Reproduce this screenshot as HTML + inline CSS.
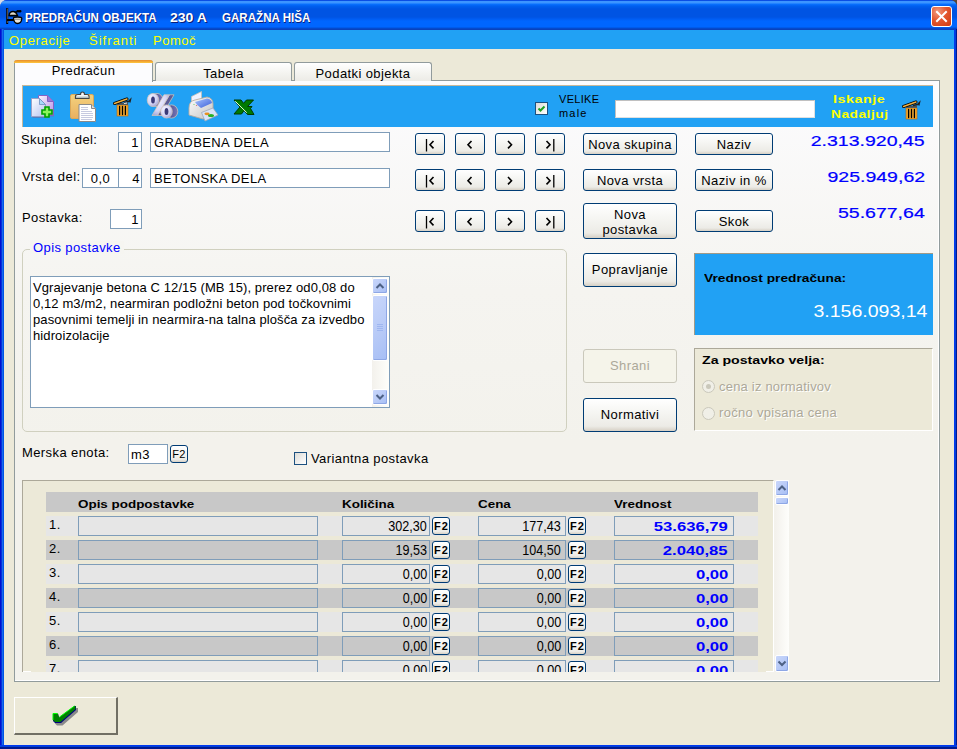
<!DOCTYPE html>
<html><head><meta charset="utf-8">
<style>
*{margin:0;padding:0;box-sizing:border-box}
html,body{width:957px;height:749px;overflow:hidden;background:#ece9d8;font-family:"Liberation Sans",sans-serif;font-size:13px;color:#000;letter-spacing:0.4px}
.a{position:absolute}
.t{position:absolute;white-space:nowrap;line-height:1}
#frame{left:0;top:0;width:957px;height:749px;background:#0842d8;border-radius:7px 7px 0 0}
#title{left:0;top:0;width:957px;height:30px;border-radius:7px 7px 0 0;background:linear-gradient(to bottom,#0a4ee4 0px,#0a4ee4 1px,#3d95ff 1px,#3d95ff 3px,#0a72ff 4px,#0060f0 6px,#0054e3 9px,#0054e3 17px,#005cf2 19px,#0066ff 21px,#0066ff 27px,#0050d8 28px,#0a44c0 29px,#0a40b8 30px)}
#lb{left:0;top:29px;width:4px;height:720px;background:linear-gradient(to right,#0010d0 0 1px,#0831d9 1px 2px,#166aee 2px 3px,#0055e5 3px 4px)}
#rb{left:954px;top:29px;width:3px;height:720px;background:linear-gradient(to right,#0038f0 0 1px,#0040d8 1px 2px,#001890 2px 3px)}
#bb{left:0;top:745px;width:957px;height:4px;background:linear-gradient(to bottom,#0038f0 0 1px,#0040d8 1px 2px,#001890 2px 4px)}
#client{left:4px;top:30px;width:950px;height:715px;background:#ece9d8}
#menu{left:4px;top:30px;width:950px;height:19px;background:#21a1f4}
.mi{color:#ffff00;font-size:13px}
.ttxt{letter-spacing:0;color:#fff;font-weight:bold;font-size:13px;text-shadow:1px 1px 0 #0a1e7a}
#close{left:931px;top:6px;width:21px;height:21px;border:1px solid #fff;border-radius:3px;background:radial-gradient(circle at 30% 25%,#f19b7f 0%,#e3572f 45%,#cf3a10 100%)}
/* tabs */
#pane{left:14px;top:80px;width:926px;height:602px;border:1px solid #919b9c;background:linear-gradient(to bottom,#fcfcfe 0%,#f5f4f0 35%,#f3f2ec 60%,#f3f2ec 100%);box-shadow:inset -1px -1px 0 #fff}
.tab{position:absolute;border:1px solid #919b9c;border-bottom:none;border-radius:3px 3px 0 0;background:linear-gradient(to bottom,#fff 0%,#f3f3ef 60%,#ecebe6 100%);text-align:center;font-size:13px}
#tb{left:22px;top:85px;width:911px;height:42px;background:#21a1f4;border-top:1px solid #c8b89a;border-left:1px solid #c8b89a}
.inp{background:#fff;border:1px solid #7f9db9;font-size:13px;line-height:1;white-space:nowrap}
.btn{border:1px solid #003c74;border-radius:3px;background:linear-gradient(to bottom,#fff 0%,#f6f6f3 40%,#ecebe6 85%,#d6d0c5 100%);text-align:center;font-size:13px;line-height:1;white-space:nowrap}
.amt{letter-spacing:0;color:#0000ff;font-size:15px;transform:scaleX(1.3);transform-origin:right;-webkit-text-stroke:0.2px #0000ff}
.sbb{border:1px solid #fff;border-radius:2px;background:linear-gradient(135deg,#c8d6fb 0%,#b9cbf7 50%,#a6bef5 100%);box-shadow:inset -1px -1px 0 #8ea7e5}
.gh{letter-spacing:0;font-size:11px;font-weight:bold;transform:scaleX(1.22);transform-origin:left}
.gc{border:1px solid #7f9db9;font-size:13px;line-height:1;white-space:nowrap;background:transparent}
.gv{color:#0000ff;font-weight:bold;font-size:13px;transform-origin:right}
.f2{border:1px solid #003c74;border-radius:3px;background:linear-gradient(to bottom,#fff,#ecebe6 85%,#d6d0c5);font-size:11px;font-weight:bold;text-align:center;line-height:1;padding-top:3px}
.f2s{border:1px solid #003c74;border-radius:3px;background:linear-gradient(to bottom,#fff,#ecebe6 85%,#d6d0c5);text-align:center;line-height:1}
.gn{position:absolute;top:2px;font-size:14px;line-height:1;letter-spacing:0;transform:scaleX(0.9);transform-origin:right}
.gv2{right:5px;top:3px;color:#0000ff;font-weight:bold;font-size:13px;transform:scaleX(1.28)}
.f2{letter-spacing:1px;text-indent:1px}
</style></head>
<body>
<div class="a" style="left:0;top:0;width:8px;height:8px;background:#d8dce6"></div><div class="a" style="left:949px;top:0;width:8px;height:8px;background:#5a4636"></div>
<div class="a" id="frame"></div>
<div class="a" id="title"></div>
<div class="a" id="lb"></div><div class="a" id="rb"></div><div class="a" id="bb"></div>
<div class="a" id="client"></div>
<div class="a" id="menu"></div>
<div class="t mi" style="left:9px;top:34px;letter-spacing:0.65px">Operacije</div>
<div class="t mi" style="left:89px;top:34px;letter-spacing:1px">Šifranti</div>
<div class="t mi" style="left:153px;top:34px;letter-spacing:0.5px">Pomoč</div>
<div class="t ttxt" style="left:25px;top:11px;transform:scaleX(0.89);transform-origin:left">PREDRAČUN OBJEKTA</div>
<div class="t ttxt" style="left:170px;top:11px;transform:scaleX(1.08);transform-origin:left">230 A</div>
<div class="t ttxt" style="left:222px;top:11px;transform:scaleX(0.89);transform-origin:left">GARAŽNA HIŠA</div>
<svg class="a" style="left:0;top:0" width="30" height="30" viewBox="0 0 30 30">
<path d="M7.2 8V24" stroke="#000" stroke-width="2"/><path d="M7.4 8.5V23" stroke="#8a7a6a" stroke-width="0.7"/>
<path d="M7 20H14" stroke="#000" stroke-width="2"/>
<path d="M9 15.5Q9.5 11.5 13 11.5Q16 11.5 17.5 15.5Z" fill="#e0dacd" stroke="#000" stroke-width="1.3"/>
<path d="M15 12.5L17 10.5H21V12H17.5Z" fill="#000" stroke="#000" stroke-width="0.8"/>
<path d="M9.5 15.8H17.5" stroke="#000" stroke-width="1.2"/>
<path d="M13.5 18Q13.5 17 17.5 17Q21.8 17 21.8 18.5Q21.5 23.5 17.5 23.5Q14 23.5 13.5 18Z" fill="#e8e4dc" stroke="#000" stroke-width="1.3"/>
<path d="M14.5 19.2H21" stroke="#666" stroke-width="0.8"/>
</svg>
<div class="a" id="close"><svg width="19" height="19" style="position:absolute;left:0;top:0"><path d="M5 5L14 14M14 5L5 14" stroke="#fff" stroke-width="2" stroke-linecap="square"/></svg></div>

<!-- tab control -->
<div class="a" id="pane"></div>
<div class="tab" style="left:155px;top:62px;width:137px;height:19px;padding-top:3px">Tabela</div>
<div class="tab" style="left:294px;top:62px;width:138px;height:19px;padding-top:3px">Podatki objekta</div>
<div class="tab" style="left:14px;top:60px;width:139px;height:22px;border-top:none;background:#fcfcfe;padding-top:3px;border-radius:3px 3px 0 0">Predračun</div>
<div class="a" style="left:14px;top:60px;width:139px;height:3px;background:linear-gradient(to bottom,#e68b2c,#ffc73c);border-radius:3px 3px 0 0"></div>
<div class="a" id="tb"></div>

<!-- toolbar content -->
<div class="a" style="left:535px;top:102px;width:13px;height:13px;border:1px solid #1c5180;background:linear-gradient(135deg,#dcdcd7,#fff)"><svg width="11" height="11" style="position:absolute;left:0;top:0"><path d="M2.5 5.5L4.5 7.5L8.5 3.5" stroke="#21a121" stroke-width="2" fill="none"/></svg></div>
<div class="t" style="left:559px;top:94px;font-size:11px;letter-spacing:0.3px">VELIKE</div>
<div class="t" style="left:559px;top:108px;font-size:11px;letter-spacing:1.2px">male</div>
<div class="a" style="left:615px;top:100px;width:200px;height:18px;background:#fff;border:1px solid #c0c0c0;border-right-color:#e0e0e0;border-bottom-color:#e0e0e0"></div>
<div class="t" style="left:833px;top:94px;font-size:11px;font-weight:bold;color:#ffff00;transform:scaleX(1.3);transform-origin:left">Iskanje</div>
<div class="t" style="left:831px;top:109px;font-size:11px;font-weight:bold;color:#ffff00;transform:scaleX(1.25);transform-origin:left">Nadaljuj</div>

<!-- form -->
<div class="t" style="left:21px;top:133px">Skupina del:</div>
<div class="t" style="left:22px;top:170px">Vrsta del:</div>
<div class="t" style="left:22px;top:211px">Postavka:</div>
<div class="a inp" style="left:118px;top:132px;width:24px;height:20px;text-align:right;padding:3px 2px 0 0">1</div>
<div class="a inp" style="left:82px;top:168px;width:37px;height:20px;text-align:center;padding:3px 0 0 0">0,0</div>
<div class="a inp" style="left:118px;top:168px;width:24px;height:20px;text-align:right;padding:3px 1px 0 0">4</div>
<div class="a inp" style="left:110px;top:209px;width:32px;height:20px;text-align:right;padding:3px 2px 0 0">1</div>
<div class="a inp" style="left:150px;top:132px;width:240px;height:20px;padding:3px 0 0 3px">GRADBENA DELA</div>
<div class="a inp" style="left:150px;top:168px;width:240px;height:20px;padding:3px 0 0 3px">BETONSKA DELA</div>
<div class="a btn" style="left:415px;top:133px;width:30px;height:22px"><svg width="30" height="22" style="position:absolute;left:-1px;top:-1px"><path d="M11.5 6V18.5" stroke="#000" stroke-width="1.3"/><path d="M18.5 8L15 11.7L18.5 15.4" stroke="#000" stroke-width="1.6" fill="none"/></svg></div>
<div class="a btn" style="left:455px;top:133px;width:30px;height:22px"><svg width="30" height="22" style="position:absolute;left:-1px;top:-1px"><path d="M16.5 8L13 11.7L16.5 15.4" stroke="#000" stroke-width="1.6" fill="none"/></svg></div>
<div class="a btn" style="left:495px;top:133px;width:30px;height:22px"><svg width="30" height="22" style="position:absolute;left:-1px;top:-1px"><path d="M13 8L16.5 11.7L13 15.4" stroke="#000" stroke-width="1.6" fill="none"/></svg></div>
<div class="a btn" style="left:535px;top:133px;width:30px;height:22px"><svg width="30" height="22" style="position:absolute;left:-1px;top:-1px"><path d="M11.5 8L15 11.7L11.5 15.4" stroke="#000" stroke-width="1.6" fill="none"/><path d="M18.8 6V18.5" stroke="#000" stroke-width="1.3"/></svg></div>
<div class="a btn" style="left:415px;top:169px;width:30px;height:22px"><svg width="30" height="22" style="position:absolute;left:-1px;top:-1px"><path d="M11.5 6V18.5" stroke="#000" stroke-width="1.3"/><path d="M18.5 8L15 11.7L18.5 15.4" stroke="#000" stroke-width="1.6" fill="none"/></svg></div>
<div class="a btn" style="left:455px;top:169px;width:30px;height:22px"><svg width="30" height="22" style="position:absolute;left:-1px;top:-1px"><path d="M16.5 8L13 11.7L16.5 15.4" stroke="#000" stroke-width="1.6" fill="none"/></svg></div>
<div class="a btn" style="left:495px;top:169px;width:30px;height:22px"><svg width="30" height="22" style="position:absolute;left:-1px;top:-1px"><path d="M13 8L16.5 11.7L13 15.4" stroke="#000" stroke-width="1.6" fill="none"/></svg></div>
<div class="a btn" style="left:535px;top:169px;width:30px;height:22px"><svg width="30" height="22" style="position:absolute;left:-1px;top:-1px"><path d="M11.5 8L15 11.7L11.5 15.4" stroke="#000" stroke-width="1.6" fill="none"/><path d="M18.8 6V18.5" stroke="#000" stroke-width="1.3"/></svg></div>
<div class="a btn" style="left:415px;top:210px;width:30px;height:22px"><svg width="30" height="22" style="position:absolute;left:-1px;top:-1px"><path d="M11.5 6V18.5" stroke="#000" stroke-width="1.3"/><path d="M18.5 8L15 11.7L18.5 15.4" stroke="#000" stroke-width="1.6" fill="none"/></svg></div>
<div class="a btn" style="left:455px;top:210px;width:30px;height:22px"><svg width="30" height="22" style="position:absolute;left:-1px;top:-1px"><path d="M16.5 8L13 11.7L16.5 15.4" stroke="#000" stroke-width="1.6" fill="none"/></svg></div>
<div class="a btn" style="left:495px;top:210px;width:30px;height:22px"><svg width="30" height="22" style="position:absolute;left:-1px;top:-1px"><path d="M13 8L16.5 11.7L13 15.4" stroke="#000" stroke-width="1.6" fill="none"/></svg></div>
<div class="a btn" style="left:535px;top:210px;width:30px;height:22px"><svg width="30" height="22" style="position:absolute;left:-1px;top:-1px"><path d="M11.5 8L15 11.7L11.5 15.4" stroke="#000" stroke-width="1.6" fill="none"/><path d="M18.8 6V18.5" stroke="#000" stroke-width="1.3"/></svg></div>

<div class="a btn" style="left:583px;top:133px;width:94px;height:22px;padding-top:4px">Nova skupina</div>
<div class="a btn" style="left:583px;top:169px;width:94px;height:22px;padding-top:4px">Nova vrsta</div>
<div class="a btn" style="left:583px;top:203px;width:94px;height:36px;padding-top:3px;line-height:15px">Nova<br>postavka</div>
<div class="a btn" style="left:695px;top:133px;width:78px;height:22px;padding-top:4px">Naziv</div>
<div class="a btn" style="left:695px;top:169px;width:78px;height:22px;padding-top:4px">Naziv in %</div>
<div class="a btn" style="left:695px;top:210px;width:78px;height:22px;padding-top:4px">Skok</div>
<div class="t amt" style="right:32px;top:133px">2.313.920,45</div>
<div class="t amt" style="right:32px;top:169px">925.949,62</div>
<div class="t amt" style="right:32px;top:205px">55.677,64</div>

<!-- group box -->
<div class="a" style="left:22px;top:249px;width:545px;height:183px;border:1px solid #d0d0bf;border-radius:5px"></div>
<div class="t" style="left:30px;top:241px;padding:0 3px;background:#f6f5f1;color:#0000ff;font-size:13px">Opis postavke</div>
<div class="a" style="left:30px;top:276px;width:360px;height:132px;background:#fff;border:1px solid #7f9db9"></div>
<div class="a" style="left:33px;top:280px;font-size:13px;line-height:16px;white-space:nowrap;letter-spacing:0.1px">Vgrajevanje betona C 12/15 (MB 15), prerez od0,08 do<br>0,12 m3/m2, nearmiran podložni beton pod točkovnimi<br>pasovnimi temelji in nearmira-na talna plošča za izvedbo<br>hidroizolacije</div>
<div class="a" style="left:372px;top:277px;width:17px;height:130px;background:linear-gradient(to right,#f3f1ec,#fefefb)"></div>
<div class="a sbb" style="left:372px;top:278px;width:16px;height:16px"><svg width="14" height="14" style="position:absolute;left:0;top:0"><path d="M3.5 9L7 5.5L10.5 9" stroke="#4d6185" stroke-width="2" fill="none"/></svg></div>
<div class="a sbb" style="left:372px;top:295px;width:16px;height:66px"><svg width="14" height="64" style="position:absolute;left:0;top:0"><path d="M4 28.5H10M4 30.5H10M4 32.5H10M4 34.5H10" stroke="#9eb6f0" stroke-width="1"/></svg></div>
<div class="a sbb" style="left:372px;top:389px;width:16px;height:16px"><svg width="14" height="14" style="position:absolute;left:0;top:0"><path d="M3.5 5L7 8.5L10.5 5" stroke="#4d6185" stroke-width="2" fill="none"/></svg></div>

<div class="a btn" style="left:583px;top:253px;width:94px;height:34px;padding-top:9px">Popravljanje</div>
<div class="a" style="left:583px;top:349px;width:94px;height:34px;padding-top:9px;border:1px solid #cac8bb;border-radius:3px;background:#f5f4ea;color:#aca899;text-align:center;font-size:13px;line-height:1">Shrani</div>
<div class="a btn" style="left:583px;top:398px;width:94px;height:34px;padding-top:9px">Normativi</div>

<div class="a" style="left:694px;top:253px;width:239px;height:82px;background:#21a1f4;border-top:1px solid #a09a88;border-left:1px solid #a09a88"></div>
<div class="t" style="left:704px;top:273px;font-size:11px;font-weight:bold;letter-spacing:0;transform:scaleX(1.25);transform-origin:left">Vrednost predračuna:</div>
<div class="t" style="right:30px;top:304px;font-size:16px;color:#fff;letter-spacing:0;transform:scaleX(1.22);transform-origin:right">3.156.093,14</div>

<div class="a" style="left:694px;top:348px;width:239px;height:83px;background:#ece9d8;border-top:1px solid #aca899;border-left:1px solid #aca899;border-bottom:1px solid #fff;border-right:1px solid #fff"></div>
<div class="t" style="left:702px;top:355px;font-size:11px;font-weight:bold;letter-spacing:0;transform:scaleX(1.286);transform-origin:left">Za postavko velja:</div>
<div class="a" style="left:702px;top:380px;width:13px;height:13px;border:1px solid #cac8bb;border-radius:50%;background:#f0efe7"><div class="a" style="left:3px;top:3px;width:5px;height:5px;border-radius:50%;background:#cac8bb"></div></div>
<div class="t" style="left:719px;top:380px;font-size:13px;letter-spacing:0.2px;color:#aca899;text-shadow:1px 1px 0 #fff">cena iz normativov</div>
<div class="a" style="left:702px;top:407px;width:13px;height:13px;border:1px solid #cac8bb;border-radius:50%;background:#f0efe7"></div>
<div class="t" style="left:719px;top:406px;font-size:13px;letter-spacing:0.3px;color:#aca899;text-shadow:1px 1px 0 #fff">ročno vpisana cena</div>

<!-- merska -->
<div class="t" style="left:22px;top:446px">Merska enota:</div>
<div class="a inp" style="left:128px;top:444px;width:40px;height:20px;padding:3px 0 0 2px">m3</div>
<div class="a f2s" style="left:170px;top:445px;width:18px;height:18px;padding-top:3px;font-size:11px">F2</div>
<div class="a" style="left:294px;top:452px;width:13px;height:13px;border:1px solid #1c5180;background:linear-gradient(135deg,#dcdcd7,#fff)"></div>
<div class="t" style="left:311px;top:452px;font-size:13px">Variantna postavka</div>

<!-- grid -->
<div class="a" style="left:22px;top:480px;width:752px;height:192px;background:#ece9d8;border-top:1px solid #aca899;border-left:1px solid #aca899;border-right:1px solid #fff;overflow:hidden">
 <div class="a" style="left:23px;top:11px;width:712px;height:20px;background:#c8c8c8"></div>
 <div class="t gh" style="left:55px;top:18px">Opis podpostavke</div>
 <div class="t gh" style="left:319px;top:18px">Količina</div>
 <div class="t gh" style="left:455px;top:18px">Cena</div>
 <div class="t gh" style="left:591px;top:18px">Vrednost</div>
 <div class="a" style="left:23px;top:35px;width:712px;height:20px;background:#e6e6e6"></div>
 <div class="t" style="left:26px;top:37px;font-size:13px">1.</div>
 <div class="a gc" style="left:55px;top:35px;width:240px;height:20px"></div>
 <div class="a gc" style="left:319px;top:35px;width:88px;height:20px"><span class="gn" style="right:2px">302,30</span></div>
 <div class="a f2" style="left:409px;top:36px;width:18px;height:18px">F2</div>
 <div class="a gc" style="left:455px;top:35px;width:88px;height:20px"><span class="gn" style="right:4px">177,43</span></div>
 <div class="a f2" style="left:545px;top:36px;width:18px;height:18px">F2</div>
 <div class="a gc" style="left:591px;top:35px;width:120px;height:20px"><span class="gn gv2">53.636,79</span></div>
 <div class="a" style="left:23px;top:59px;width:712px;height:20px;background:#c8c8c8"></div>
 <div class="t" style="left:26px;top:61px;font-size:13px">2.</div>
 <div class="a gc" style="left:55px;top:59px;width:240px;height:20px"></div>
 <div class="a gc" style="left:319px;top:59px;width:88px;height:20px"><span class="gn" style="right:2px">19,53</span></div>
 <div class="a f2" style="left:409px;top:60px;width:18px;height:18px">F2</div>
 <div class="a gc" style="left:455px;top:59px;width:88px;height:20px"><span class="gn" style="right:4px">104,50</span></div>
 <div class="a f2" style="left:545px;top:60px;width:18px;height:18px">F2</div>
 <div class="a gc" style="left:591px;top:59px;width:120px;height:20px"><span class="gn gv2">2.040,85</span></div>
 <div class="a" style="left:23px;top:83px;width:712px;height:20px;background:#e6e6e6"></div>
 <div class="t" style="left:26px;top:85px;font-size:13px">3.</div>
 <div class="a gc" style="left:55px;top:83px;width:240px;height:20px"></div>
 <div class="a gc" style="left:319px;top:83px;width:88px;height:20px"><span class="gn" style="right:2px">0,00</span></div>
 <div class="a f2" style="left:409px;top:84px;width:18px;height:18px">F2</div>
 <div class="a gc" style="left:455px;top:83px;width:88px;height:20px"><span class="gn" style="right:4px">0,00</span></div>
 <div class="a f2" style="left:545px;top:84px;width:18px;height:18px">F2</div>
 <div class="a gc" style="left:591px;top:83px;width:120px;height:20px"><span class="gn gv2">0,00</span></div>
 <div class="a" style="left:23px;top:107px;width:712px;height:20px;background:#c8c8c8"></div>
 <div class="t" style="left:26px;top:109px;font-size:13px">4.</div>
 <div class="a gc" style="left:55px;top:107px;width:240px;height:20px"></div>
 <div class="a gc" style="left:319px;top:107px;width:88px;height:20px"><span class="gn" style="right:2px">0,00</span></div>
 <div class="a f2" style="left:409px;top:108px;width:18px;height:18px">F2</div>
 <div class="a gc" style="left:455px;top:107px;width:88px;height:20px"><span class="gn" style="right:4px">0,00</span></div>
 <div class="a f2" style="left:545px;top:108px;width:18px;height:18px">F2</div>
 <div class="a gc" style="left:591px;top:107px;width:120px;height:20px"><span class="gn gv2">0,00</span></div>
 <div class="a" style="left:23px;top:131px;width:712px;height:20px;background:#e6e6e6"></div>
 <div class="t" style="left:26px;top:133px;font-size:13px">5.</div>
 <div class="a gc" style="left:55px;top:131px;width:240px;height:20px"></div>
 <div class="a gc" style="left:319px;top:131px;width:88px;height:20px"><span class="gn" style="right:2px">0,00</span></div>
 <div class="a f2" style="left:409px;top:132px;width:18px;height:18px">F2</div>
 <div class="a gc" style="left:455px;top:131px;width:88px;height:20px"><span class="gn" style="right:4px">0,00</span></div>
 <div class="a f2" style="left:545px;top:132px;width:18px;height:18px">F2</div>
 <div class="a gc" style="left:591px;top:131px;width:120px;height:20px"><span class="gn gv2">0,00</span></div>
 <div class="a" style="left:23px;top:155px;width:712px;height:20px;background:#c8c8c8"></div>
 <div class="t" style="left:26px;top:157px;font-size:13px">6.</div>
 <div class="a gc" style="left:55px;top:155px;width:240px;height:20px"></div>
 <div class="a gc" style="left:319px;top:155px;width:88px;height:20px"><span class="gn" style="right:2px">0,00</span></div>
 <div class="a f2" style="left:409px;top:156px;width:18px;height:18px">F2</div>
 <div class="a gc" style="left:455px;top:155px;width:88px;height:20px"><span class="gn" style="right:4px">0,00</span></div>
 <div class="a f2" style="left:545px;top:156px;width:18px;height:18px">F2</div>
 <div class="a gc" style="left:591px;top:155px;width:120px;height:20px"><span class="gn gv2">0,00</span></div>
 <div class="a" style="left:23px;top:179px;width:712px;height:20px;background:#e6e6e6"></div>
 <div class="t" style="left:26px;top:181px;font-size:13px">7.</div>
 <div class="a gc" style="left:55px;top:179px;width:240px;height:20px"></div>
 <div class="a gc" style="left:319px;top:179px;width:88px;height:20px"><span class="gn" style="right:2px">0,00</span></div>
 <div class="a f2" style="left:409px;top:180px;width:18px;height:18px">F2</div>
 <div class="a gc" style="left:455px;top:179px;width:88px;height:20px"><span class="gn" style="right:4px">0,00</span></div>
 <div class="a f2" style="left:545px;top:180px;width:18px;height:18px">F2</div>
 <div class="a gc" style="left:591px;top:179px;width:120px;height:20px"><span class="gn gv2">0,00</span></div>
 <div class="a" style="left:0;top:190px;width:8px;height:1px;background:#fff"></div><div class="a" style="left:743px;top:190px;width:8px;height:1px;background:#fff"></div>
</div>
<div class="a" style="left:775px;top:480px;width:14px;height:192px;background:linear-gradient(to right,#f3f1ec,#fefefb)"></div>
<div class="a sbb" style="left:775px;top:480px;width:14px;height:16px"><svg width="12" height="14" style="position:absolute;left:0;top:0"><path d="M2.5 9L6 5.5L9.5 9" stroke="#4d6185" stroke-width="2" fill="none"/></svg></div>
<div class="a sbb" style="left:775px;top:497px;width:14px;height:8px"></div>
<div class="a sbb" style="left:775px;top:655px;width:14px;height:17px"><svg width="12" height="14" style="position:absolute;left:0;top:0"><path d="M2.5 5.5L6 9L9.5 5.5" stroke="#4d6185" stroke-width="2" fill="none"/></svg></div>

<!-- ok button -->
<div class="a" style="left:14px;top:697px;width:104px;height:38px;background:#ece9d8;border-top:1px solid #fff;border-left:1px solid #fff;border-right:2px solid #716f64;border-bottom:2px solid #716f64"></div>

<!-- toolbar icons -->
<svg class="a" style="left:28px;top:90px" width="30" height="32" viewBox="0 0 30 32">
 <defs>
  <linearGradient id="gp" x1="0" y1="0" x2="1" y2="1"><stop offset="0" stop-color="#fbf6ff"/><stop offset="1" stop-color="#b68ee6"/></linearGradient>
  <linearGradient id="gw" x1="0" y1="0" x2="1" y2="1"><stop offset="0" stop-color="#ffffff"/><stop offset="1" stop-color="#b4c2f0"/></linearGradient>
 </defs>
 <path d="M11 26.5H26V12Z" fill="#7a6a9a" opacity="0.5"/>
 <path d="M10.5 5.5H19.5L25.5 11.5V25.5H10.5Z" fill="url(#gp)" stroke="#8462c4" stroke-width="1"/>
 <path d="M19.5 5.5V11.5H25.5" fill="#9a7ad6" stroke="#8462c4" stroke-width="1"/>
 <path d="M3.5 8.5H11.5L17.5 14.5V26.5H3.5Z" fill="url(#gw)" stroke="#9aa0c8" stroke-width="1"/>
 <path d="M11.5 8.5V14.5H17.5Z" fill="#a8d8f8" stroke="#7090c0" stroke-width="0.8"/>
 <path d="M4.5 27.5H17" stroke="#6a6aa0" stroke-width="1" opacity="0.6"/>
 <path d="M17 17H21V20H24V24H21V27H17V24H14V20H17Z" fill="#8cf55a" stroke="#00a000" stroke-width="1.6" stroke-linejoin="miter"/>
</svg>
<svg class="a" style="left:66px;top:88px" width="34" height="36" viewBox="0 0 34 36">
 <defs><linearGradient id="gc" x1="0" y1="0" x2="0" y2="1"><stop offset="0" stop-color="#f5d27e"/><stop offset="1" stop-color="#e8b060"/></linearGradient></defs>
 <rect x="4.5" y="6.5" width="23" height="24" rx="1.5" fill="url(#gc)" stroke="#d9a85a" stroke-width="1"/>
 <path d="M9.5 8.5Q9.5 6.5 12 6.5H14.5Q14.5 4 16.5 4Q18.5 4 18.5 6.5H21Q23 6.5 23 8.5V10.5H9.5Z" fill="#f4f4f4" stroke="#444" stroke-width="1.2"/>
 <path d="M10 9.2H22.5" stroke="#9aa" stroke-width="1"/>
 <path d="M13 16.5H25.5L29.5 20.5V33.5H13Z" fill="#fff" stroke="#8a8a8a" stroke-width="1"/>
 <path d="M25.5 16.5V20.5H29.5" fill="#ddd" stroke="#8a8a8a" stroke-width="1"/>
 <path d="M15 19.5H22M15 21.5H22M15 23.5H26M15 25.5H27M15 27.5H27M15 29.5H27M15 31.5H26" stroke="#b8bcd8" stroke-width="0.8"/>
</svg>
<svg class="a" style="left:110px;top:95px" width="26" height="24" viewBox="0 0 26 24">
 <rect x="7" y="10" width="11" height="11" fill="#f2a830" stroke="#c06800" stroke-width="0.6"/>
 <rect x="7" y="7.8" width="11" height="2" fill="#505050"/>
 <path d="M9.6 11.5V19.5M12.5 11.5V19.5M15.4 11.5V19.5" stroke="#000" stroke-width="1.3" stroke-linecap="round"/>
 <path d="M4.5 8.5L17 4" stroke="#000" stroke-width="3" stroke-linecap="round"/>
 <path d="M4.5 8.5L17 4" stroke="#f0b040" stroke-width="1.4" stroke-linecap="round"/>
 <path d="M14 7.5L18.5 6.5L20.5 4.5L19.8 7.5" stroke="#222" stroke-width="1.4" fill="none"/>
 <path d="M14 8.4L17 8" stroke="#fff" stroke-width="1"/>
</svg>
<svg class="a" style="left:144px;top:90px" width="38" height="32" viewBox="0 0 38 32">
 <defs><linearGradient id="gx" x1="0" y1="0" x2="1" y2="0"><stop offset="0" stop-color="#3e3e7e"/><stop offset="1" stop-color="#7878b8"/></linearGradient>
 <radialGradient id="gf" cx="0.35" cy="0.3" r="0.8"><stop offset="0" stop-color="#f0f0ff"/><stop offset="0.6" stop-color="#d4d4f4"/><stop offset="1" stop-color="#9a9ad0"/></radialGradient></defs>
 <ellipse cx="13" cy="10" rx="6" ry="6.6" fill="url(#gx)" stroke="#d8c8b8" stroke-width="0.7"/>
 <path d="M13.5 25.5L25.5 4.8H30L18 25.5Z" fill="#5c5c98" stroke="#d8c8b8" stroke-width="0.7"/>
 <ellipse cx="9" cy="10" rx="5.8" ry="6.6" fill="url(#gf)" stroke="#d8c8b8" stroke-width="0.7"/>
 <ellipse cx="9" cy="10" rx="1.9" ry="3.5" fill="#3a3a78"/>
 <path d="M8 25.5L20 4.8H25.5L13.5 25.5Z" fill="url(#gf)" stroke="#d8c8b8" stroke-width="0.7"/>
 <ellipse cx="27.5" cy="21.5" rx="6.3" ry="6.6" fill="url(#gx)" stroke="#d8c8b8" stroke-width="0.7"/>
 <ellipse cx="22.5" cy="21.5" rx="5.8" ry="6.6" fill="url(#gf)" stroke="#d8c8b8" stroke-width="0.7"/>
 <ellipse cx="22.5" cy="21.5" rx="1.9" ry="3.5" fill="#3a3a78"/>
</svg>
<svg class="a" style="left:185px;top:88px" width="36" height="36" viewBox="0 0 36 36">
 <defs>
  <linearGradient id="gpr" x1="0" y1="0" x2="1" y2="1"><stop offset="0" stop-color="#fdfdfd"/><stop offset="1" stop-color="#c4c4c4"/></linearGradient>
  <linearGradient id="gbl" x1="0" y1="0" x2="1" y2="1"><stop offset="0" stop-color="#a8c4ff"/><stop offset="1" stop-color="#3a5ed8"/></linearGradient>
 </defs>
 <path d="M6.5 8.5L16.5 3.5V12L6.5 16Z" fill="#eef2ff" stroke="#c8c0b8" stroke-width="0.8"/>
 <path d="M4 20Q4 13 10 12L22 9Q28 10 28 16V27L18 31L4 27Z" fill="url(#gpr)" stroke="#b8aca0" stroke-width="0.9"/>
 <path d="M10 14L22 10.5Q26.5 11 27 15L16 20Q12 17.5 10 14Z" fill="url(#gbl)"/>
 <path d="M16.5 24.5L28 20L33 27L20 33Z" fill="#d8e4f8" stroke="#a0a8b8" stroke-width="0.8"/>
 <ellipse cx="22" cy="25.8" rx="2.6" ry="1.4" fill="#e89020"/>
 <ellipse cx="26" cy="27.5" rx="3" ry="1.6" fill="#28b028"/>
 <circle cx="9" cy="16.5" r="0.6" fill="#6c6"/><circle cx="11.5" cy="17.5" r="0.6" fill="#d66"/>
</svg>
<svg class="a" style="left:228px;top:94px" width="32" height="26" viewBox="0 0 32 26">
 <path d="M6 6H13L15.5 9.3L18.5 6H25.5L19.5 12.5H24L22.5 14.5L26 20.5H19.5L16 16.5L13.5 20H6L12 13Z" fill="#007a00" stroke="#003a00" stroke-width="1"/>
 <path d="M7.3 7.3L18.8 18.7" stroke="#e8ffd8" stroke-width="1"/>
</svg>
<svg class="a" style="left:899px;top:98px" width="26" height="24" viewBox="0 0 26 24">
 <rect x="7" y="10" width="11" height="11" fill="#f2a830" stroke="#c06800" stroke-width="0.6"/>
 <rect x="7" y="7.8" width="11" height="2" fill="#505050"/>
 <path d="M9.6 11.5V19.5M12.5 11.5V19.5M15.4 11.5V19.5" stroke="#000" stroke-width="1.3" stroke-linecap="round"/>
 <path d="M4.5 8.5L17 4" stroke="#000" stroke-width="3" stroke-linecap="round"/>
 <path d="M4.5 8.5L17 4" stroke="#f0b040" stroke-width="1.4" stroke-linecap="round"/>
 <path d="M14 7.5L18.5 6.5L20.5 4.5L19.8 7.5" stroke="#222" stroke-width="1.4" fill="none"/>
</svg>
<!-- OK check -->
<svg class="a" style="left:46px;top:700px" width="40" height="30" viewBox="0 0 40 30">
 <path d="M9 16H13L14 20L30 8H32V12L16.5 25.5H11L9 23.5Z" fill="#8a8a8a"/>
 <path d="M7 14H12L13 18L29 6H30V10L15 23H9L7 21Z" fill="#000080"/>
 <path d="M7 13.5H12L13 17.5L28.5 6H29.5V9L14.5 22H9L7 20Z" fill="#008000"/>
 <path d="M7 20V13.5H11.5M13.5 17L28.5 6" stroke="#00ff00" stroke-width="1" fill="none"/>
</svg>

</body></html>
